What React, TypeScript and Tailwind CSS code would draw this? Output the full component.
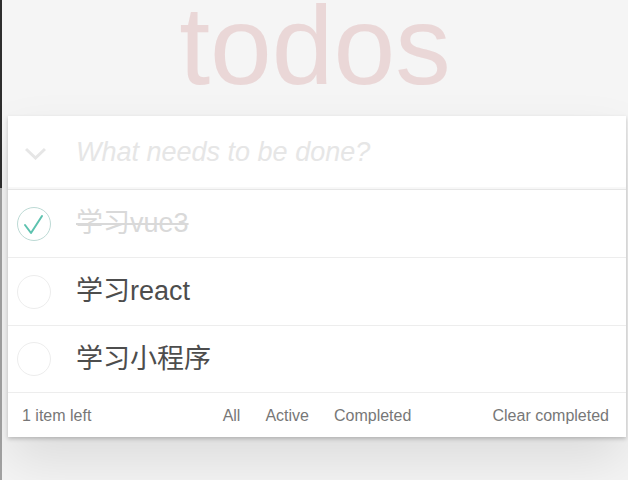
const todos = [
  { id: 1, title: "学习vue3", done: true },
  { id: 2, title: "学习react", done: false },
  { id: 3, title: "学习小程序", done: false },
];

const font = "font-['Liberation_Sans','Noto_Sans_CJK_SC',sans-serif]";

function CheckCircle({ done }: { done: boolean }) {
  return (
    <svg width="36" height="36" viewBox="0 0 36 36" className="shrink-0">
      <circle
        cx="18"
        cy="18"
        r="16.5"
        fill="none"
        stroke={done ? "#bddad5" : "#ededed"}
        strokeWidth="1"
      />
      {done && (
        <polyline
          points="9,19 15,27 26,10"
          fill="none"
          stroke="#5dc2af"
          strokeWidth="2"
          strokeLinecap="round"
          strokeLinejoin="round"
        />
      )}
    </svg>
  );
}

export default function App() {
  return (
    <div className={`flex h-[480px] w-[628px] overflow-hidden bg-[#f5f5f5] ${font}`}>
      <div className="flex w-[2px] shrink-0 flex-col">
        <div className="h-[188px] bg-[#2e2e2e]" />
        <div className="flex-1 bg-[#a3a3a3]" />
      </div>

      <div className="flex-1">
        <div className="h-[116px] pt-[2px] text-center">
          <h1 className="text-[111px] leading-[89px] font-thin text-[#ead7d7]">todos</h1>
        </div>

        <section className="ml-[6px] w-[618px] bg-white shadow-[0_2px_4px_0_rgba(0,0,0,0.2),0_25px_50px_0_rgba(0,0,0,0.1)]">
          <header className="flex h-[73px] items-center shadow-[inset_0_-2px_1px_rgba(0,0,0,0.03)]">
            <div className="flex w-[69px] shrink-0 justify-center pr-[14px]">
              <svg width="21" height="14" viewBox="0 0 21 14">
                <polyline
                  points="1,3 10.5,12 20,3"
                  fill="none"
                  stroke="#e6e6e6"
                  strokeWidth="3"
                />
              </svg>
            </div>
            <input
              className="-ml-px flex-1 bg-transparent text-[27px] text-[#4d4d4d] outline-none placeholder:italic placeholder:text-[#e6e6e6]"
              placeholder="What needs to be done?"
            />
          </header>

          <ul className="border-t border-[#e6e6e6]">
            {todos.map((todo) => (
              <li
                key={todo.id}
                className="flex h-[68px] items-center border-b border-[#ededed] last:h-[67px]"
              >
                <div className="flex w-[68px] shrink-0 pl-[8px]">
                  <CheckCircle done={todo.done} />
                </div>
                <span
                  className={
                    todo.done
                      ? "text-[27px] text-[#d9d9d9] line-through"
                      : "text-[27px] text-[#4d4d4d]"
                  }
                >
                  {todo.title}
                </span>
              </li>
            ))}
          </ul>

          <footer className="grid h-[44px] grid-cols-[1fr_auto_1fr] items-center px-[14px] pt-px text-[16px] text-[#777]">
            <span>1 item left</span>
            <nav className="flex">
              {["All", "Active", "Completed"].map((f) => (
                <a key={f} className="mx-[3.5px] border border-transparent px-2 py-[3px]">
                  {f}
                </a>
              ))}
            </nav>
            <span className="pr-[3px] text-right">Clear completed</span>
          </footer>
        </section>
      </div>
    </div>
  );
}
